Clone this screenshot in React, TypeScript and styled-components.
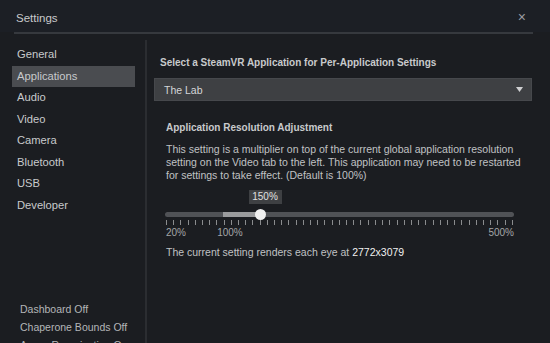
import React from 'react'
import styled, { createGlobalStyle } from 'styled-components'

const GlobalStyle = createGlobalStyle`
    html, body {
        margin: 0;
        padding: 0;
        background: #1b1d21;
    }
    body {
        font-family: "Liberation Sans", Arial, sans-serif;
        color: #c6c8ca;
    }
`

const MIN = 20
const MAX = 500
const TRACK_WIDTH = 349

function pos(value: number) {
    return ((value - MIN) / (MAX - MIN)) * TRACK_WIDTH
}

const sections = ['General', 'Applications', 'Audio', 'Video', 'Camera', 'Bluetooth', 'USB', 'Developer']
const quick = ['Dashboard Off', 'Chaperone Bounds Off', 'Async Reprojection On']

export default function App() {
    const value = 150
    const ticks = Array.from({ length: 49 })

    return (
        <Window>
            <GlobalStyle />
            <Header>
                <Title>Settings</Title>
                <Close>×</Close>
            </Header>
            <Separator />
            <Body>
                <Sidebar>
                    <NavList>
                        {sections.map(s => (
                            <NavItem key={s} active={s === 'Applications'}>{s}</NavItem>
                        ))}
                    </NavList>
                    <QuickList>
                        {quick.map(q => <QuickItem key={q}>{q}</QuickItem>)}
                    </QuickList>
                </Sidebar>
                <Content>
                    <Heading>Select a SteamVR Application for Per-Application Settings</Heading>
                    <Dropdown>
                        <span>The Lab</span>
                        <Arrow viewBox="0 0 7 5" width="7" height="5">
                            <path d="M0 0 L7 0 L3.5 5 Z" fill="#cfd0d2" />
                        </Arrow>
                    </Dropdown>
                    <Section>
                        <SubHeading>Application Resolution Adjustment</SubHeading>
                        <Paragraph>
                            This setting is a multiplier on top of the current global application resolution
                            setting on the Video tab to the left. This application may need to be restarted
                            for settings to take effect. (Default is 100%)
                        </Paragraph>
                        <Slider>
                            <TooltipRow>
                                <Tooltip style={{ left: pos(value) - 11 }}>{value}%</Tooltip>
                            </TooltipRow>
                            <Track>
                                <Fill style={{ left: pos(100), width: pos(value) - pos(100) }} />
                                <Thumb style={{ left: pos(value) - 5 }} />
                            </Track>
                            <Ticks>
                                {ticks.map((_, i) => <Tick key={i} />)}
                            </Ticks>
                            <Labels>
                                <Label style={{ left: 1 }}>20%</Label>
                                <Label style={{ left: pos(100) - 6 }}>100%</Label>
                                <Label style={{ right: 0 }}>500%</Label>
                            </Labels>
                        </Slider>
                        <Result>
                            The current setting renders each eye at <strong>2772x3079</strong>
                        </Result>
                    </Section>
                </Content>
            </Body>
        </Window>
    )
}

const Window = styled.div`
    width: 550px;
    height: 343px;
    overflow: hidden;
    display: flex;
    flex-direction: column;
    background: #1b1d21;
`

const Header = styled.div`
    height: 32px;
    display: flex;
    align-items: center;
    justify-content: space-between;
    padding: 0 22px 0 16px;
    background: #1c1f25;
`

const Title = styled.div`
    font-size: 11.5px;
    color: #c8cacc;
    margin-top: 4px;
`

const Close = styled.div`
    font-size: 14px;
    color: #9a9ca0;
    margin-top: 2px;
    margin-right: 2px;
`

const Separator = styled.div`
    height: 2px;
    margin: 0 17px 0 14px;
    background: #36393e;
`

const Body = styled.div`
    flex: 1;
    display: flex;
    padding-top: 6px;
`

const Sidebar = styled.div`
    width: 147px;
    border-right: 2px solid #2b2d31;
    display: flex;
    flex-direction: column;
    justify-content: space-between;
    padding: 4px 0 0 12px;
    box-sizing: border-box;
`

const NavList = styled.div`
    display: flex;
    flex-direction: column;
    width: 123px;
`

const NavItem = styled.div<{ active?: boolean }>`
    height: 21.5px;
    line-height: 21.5px;
    padding-left: 5px;
    font-size: 11.2px;
    color: #c8cacc;
    background: ${p => (p.active ? '#4a4c50' : 'transparent')};
`

const QuickList = styled.div`
    display: flex;
    flex-direction: column;
    padding-left: 8px;
    margin-bottom: -11px;
`

const QuickItem = styled.div`
    height: 18px;
    line-height: 18px;
    font-size: 10.5px;
    color: #b4b6b8;
    white-space: nowrap;
`

const Content = styled.div`
    flex: 1;
    padding: 16px 18px 0 7px;
`

const Heading = styled.div`
    font-size: 10px;
    font-weight: bold;
    color: #c8cacc;
    line-height: 14px;
    padding-left: 6px;
`

const SubHeading = styled.div`
    font-size: 10px;
    font-weight: bold;
    color: #c8cacc;
    line-height: 14px;
`

const Dropdown = styled.div`
    margin-top: 8px;
    height: 23px;
    display: flex;
    align-items: center;
    justify-content: space-between;
    padding: 0 8px 0 9px;
    background: #3e4043;
    border: 1px solid #46484c;
    box-sizing: border-box;
    font-size: 10.5px;
    color: #d4d6d8;
`

const Arrow = styled.svg`
    display: block;
`

const Section = styled.div`
    margin-top: 20px;
    padding-left: 12px;
`

const Paragraph = styled.div`
    margin-top: 8px;
    width: 360px;
    font-size: 10.5px;
    line-height: 13px;
    color: #c0c2c4;
`

const Slider = styled.div`
    width: ${TRACK_WIDTH}px;
    margin-top: 8px;
    margin-left: -1px;
`

const TooltipRow = styled.div`
    position: relative;
    height: 14px;
`

const Tooltip = styled.div`
    position: absolute;
    top: 0;
    width: 33px;
    height: 14px;
    line-height: 14px;
    text-align: center;
    font-size: 10px;
    color: #e0e0e0;
    background: #3e4043;
`

const Track = styled.div`
    position: relative;
    margin-top: 8px;
    height: 5px;
    border-radius: 3px;
    background: #505256;
`

const Fill = styled.div`
    position: absolute;
    top: 0;
    height: 5px;
    background: #9a9b9d;
`

const Thumb = styled.div`
    position: absolute;
    top: -3px;
    width: 11px;
    height: 11px;
    border-radius: 50%;
    background: #f0f0f0;
`

const Ticks = styled.div`
    display: flex;
    justify-content: space-between;
    margin-top: 3px;
    padding: 0 1px;
`

const Tick = styled.div`
    width: 1px;
    height: 5px;
    background: #8a8c8e;
`

const Labels = styled.div`
    position: relative;
    height: 13px;
    margin-top: 1px;
`

const Label = styled.span`
    position: absolute;
    top: 0;
    font-size: 10px;
    line-height: 13px;
    color: #a4a6a8;
`

const Result = styled.div`
    margin-top: 7px;
    font-size: 10.5px;
    color: #c0c2c4;

    strong {
        font-weight: normal;
        color: #f0f0f0;
    }
`
